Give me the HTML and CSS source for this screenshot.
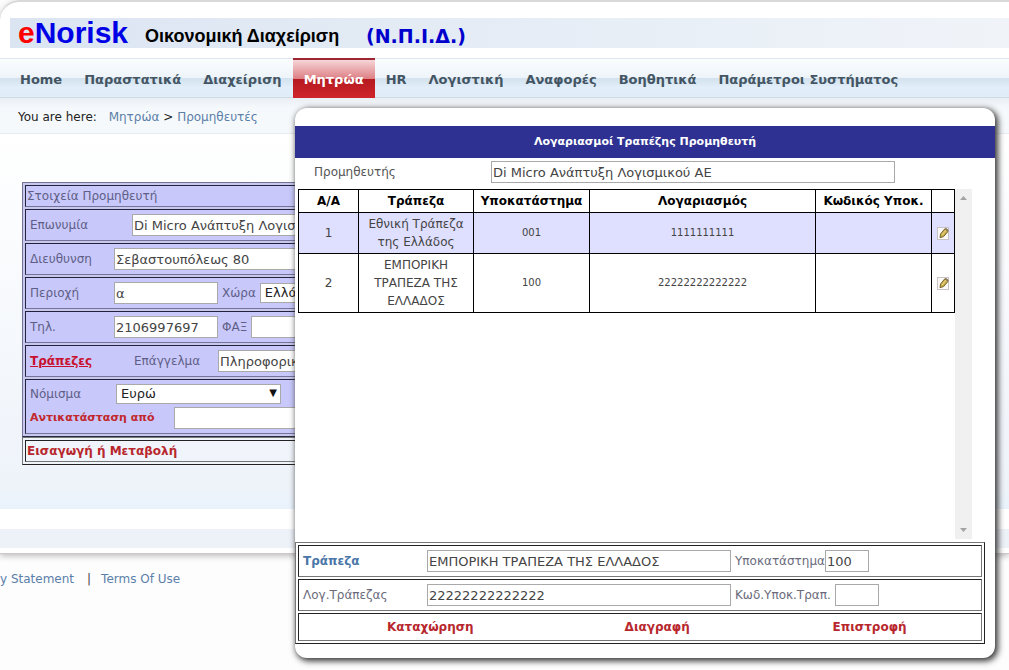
FILE: index.html
```html
<!DOCTYPE html>
<html lang="el">
<head>
<meta charset="utf-8">
<title>eNorisk</title>
<link rel="stylesheet" href="styles.css">
</head>
<body>
<div class="frame">
  <header class="brand">
    <span class="logo"><span class="logo-e">e</span>Norisk</span>
    <span class="product">Οικονομική Διαχείριση</span>
    <span class="entity">(Ν.Π.Ι.Δ.)</span>
  </header>
  <nav class="menu">
    <a href="#">Home</a>
    <a href="#">Παραστατικά</a>
    <a href="#">Διαχείριση</a>
    <a href="#" class="active">Μητρώα</a>
    <a href="#">HR</a>
    <a href="#">Λογιστική</a>
    <a href="#">Αναφορές</a>
    <a href="#">Βοηθητικά</a>
    <a href="#">Παράμετροι Συστήματος</a>
  </nav>
  <div class="crumbs">
    <span class="here">You are here:</span>
    <a href="#">Μητρώα</a> <span>&gt;</span> <a href="#">Προμηθευτές</a>
  </div>
  <main class="content">
    <form class="supplier">
      <div class="box lilac">
        <div class="row heading">Στοιχεία Προμηθευτή</div>
        <div class="row">
          <label class="wide" for="name">Επωνυμία</label>
          <input class="long" id="name" value="Di Micro Ανάπτυξη Λογισμικού ΑΕ">
        </div>
        <div class="row">
          <label class="col" for="address">Διευθυνση</label>
          <input class="long" id="address" value="Σεβαστουπόλεως 80">
        </div>
        <div class="row">
          <label class="col" for="area">Περιοχή</label>
          <input class="short" id="area" value="α">
          <label class="inline" for="country">Χώρα</label>
          <span class="pick"><select id="country"><option>Ελλάδα</option></select></span>
        </div>
        <div class="row">
          <label class="col" for="phone">Τηλ.</label>
          <input class="short" id="phone" value="2106997697">
          <label class="inline" for="fax">ΦΑΞ</label>
          <input class="short" id="fax">
        </div>
        <div class="row">
          <a href="#" class="banks">Τράπεζες</a>
          <label class="col" for="job">Επάγγελμα</label>
          <input class="long" id="job" value="Πληροφορική">
        </div>
        <div class="row double">
          <div class="line">
            <label class="currency" for="currency">Νόμισμα</label>
            <span class="pick"><select id="currency"><option>Ευρώ</option></select></span>
          </div>
          <div class="line">
            <label class="replace" for="replace">Αντικατάσταση από</label>
            <input class="long" id="replace">
          </div>
        </div>
      </div>
      <div class="box">
        <div class="row heading"><a href="#" class="action">Εισαγωγή ή Μεταβολή</a></div>
      </div>
    </form>
  </main>
  <div class="band"></div>
</div>
<footer class="legal"><a href="#">y Statement</a><span>|</span><a href="#">Terms Of Use</a></footer>

<section class="dialog" role="dialog" aria-labelledby="dialog-title">
  <h1 id="dialog-title">Λογαριασμοί Τραπέζης Προμηθευτή</h1>
  <div class="owner">
    <label for="owner">Προμηθευτής</label>
    <input id="owner" value="Di Micro Ανάπτυξη Λογισμικού ΑΕ">
  </div>
  <div class="viewport">
    <table class="accounts">
      <colgroup><col class="c-num"><col class="c-bank"><col class="c-branch"><col><col class="c-branch"><col class="c-edit"></colgroup>
      <thead>
        <tr><th>Α/Α</th><th>Τράπεζα</th><th>Υποκατάστημα</th><th>Λογαριασμός</th><th>Κωδικός Υποκ.</th><th></th></tr>
      </thead>
      <tbody>
        <tr class="selected">
          <td>1</td><td>Εθνική Τράπεζα της Ελλάδος</td><td class="code">001</td><td class="code">1111111111</td><td></td>
          <td><button class="edit" type="button" aria-label="Επεξεργασία"><svg viewBox="0 0 13 13" width="13" height="13"><rect x=".5" y=".5" width="11" height="12" fill="#fbfaf8" stroke="#c9c3c6"/><path d="M3 10.600 3.500 7 7.800 1.800 11 4.400 6.600 9.600Z" fill="#c9ad4c" stroke="#77652c"/><path d="M5 8 9 3.200" stroke="#f0dc94"/><path d="M7.800 1.800 9 .8 11.900 3.200 11 4.400Z" fill="#8b7a62"/></svg></button></td>
        </tr>
        <tr>
          <td>2</td><td>ΕΜΠΟΡΙΚΗ ΤΡΑΠΕΖΑ ΤΗΣ ΕΛΛΑΔΟΣ</td><td class="code">100</td><td class="code">22222222222222</td><td></td>
          <td><button class="edit" type="button" aria-label="Επεξεργασία"><svg viewBox="0 0 13 13" width="13" height="13"><rect x=".5" y=".5" width="11" height="12" fill="#fbfaf8" stroke="#c9c3c6"/><path d="M3 10.600 3.500 7 7.800 1.800 11 4.400 6.600 9.600Z" fill="#c9ad4c" stroke="#77652c"/><path d="M5 8 9 3.200" stroke="#f0dc94"/><path d="M7.800 1.800 9 .8 11.900 3.200 11 4.400Z" fill="#8b7a62"/></svg></button></td>
        </tr>
      </tbody>
    </table>
    <div class="track" aria-hidden="true">
      <svg viewBox="0 0 7 4" width="7" height="4"><path d="M0 4 3.500 0 7 4Z" fill="#a3a3a3"/></svg>
      <svg viewBox="0 0 7 4" width="7" height="4"><path d="M0 0 3.500 4 7 0Z" fill="#a3a3a3"/></svg>
    </div>
  </div>
  <form class="box editor">
    <div class="row">
      <label class="field bank" for="bank">Τράπεζα</label>
      <input class="value" id="bank" value="ΕΜΠΟΡΙΚΗ ΤΡΑΠΕΖΑ ΤΗΣ ΕΛΛΑΔΟΣ">
      <label class="inline tight" for="branch">Υποκατάστημα</label>
      <input class="tiny" id="branch" value="100">
    </div>
    <div class="row">
      <label class="field" for="account">Λογ.Τράπεζας</label>
      <input class="value" id="account" value="22222222222222">
      <label class="inline" for="code">Κωδ.Υποκ.Τραπ.</label>
      <input class="tiny" id="code">
    </div>
    <div class="row actions">
      <a href="#" class="action">Καταχώρηση</a>
      <a href="#" class="action">Διαγραφή</a>
      <a href="#" class="action">Επιστροφή</a>
    </div>
  </form>
</section>
</body>
</html>
```
FILE: styles.css
```css
* { box-sizing: border-box; }

body {
  margin: 0;
  position: relative;
  min-height: 100vh;
  overflow: hidden;
  background: #fdfdfe;
  color: #444;
  font: 12px/18px "DejaVu Sans", Verdana, sans-serif;
}

a { color: #5b7fa8; text-decoration: none; }

.frame {
  background: #fff;
  border-top: 2px solid #d9d9d9;
  border-bottom: 1px solid #cfc8c8;
  border-top-left-radius: 20px;
  box-shadow: 0 2px 6px #bbb;
  padding-bottom: 5px;
}

.brand {
  display: flex;
  align-items: center;
  height: 30px;
  margin: 16px 0 10px 10px;
  padding-left: 8px;
  background: linear-gradient(90deg, #dbe5f2, #f0f4f9);
  font-weight: bold;
  white-space: nowrap;
}
.logo {
  width: 127px;
  color: #0000e6;
  font: bold 30px/30px "Liberation Sans", Arial, sans-serif;
}
.logo-e { color: #f00; }
.product {
  width: 221px;
  padding-top: 6px;
  color: #000;
  font: bold 18px/24px "Liberation Sans", Arial, sans-serif;
}
.entity { padding-top: 6px; color: #0000cd; font-size: 19px; line-height: 24px; }

.menu {
  display: flex;
  height: 40px;
  padding-left: 9px;
  border-top: 1px solid #dde6ec;
  border-bottom: 1px solid #cfdbe4;
  background: linear-gradient(#fbfdfe 0, #edf4f9 50%, #d3e2ee 51%, #e2eef9 75%, #e0edf9 100%);
}
.menu a {
  padding: 0 11px;
  color: #435563;
  font-size: 13px;
  font-weight: bold;
  line-height: 42px;
  white-space: nowrap;
}
.menu a.active {
  margin-top: -1px;
  margin-bottom: -1px;
  border-top: 2px solid #9c2733;
  background: linear-gradient(#f6d5d7 0, #dd7f84 50%, #b51a20 51%, #cf242b 100%);
  color: #fff;
  line-height: 40px;
}

.crumbs {
  height: 36px;
  padding: 10px 18px;
  border-bottom: 1px solid #e6ecf2;
  background: linear-gradient(#e9eef3, #f6f9fc 10px);
  white-space: nowrap;
}
.here { margin-right: 8px; }
.crumbs span { color: #222; }

.content {
  padding: 48px 60px 44px 22px;
  background: linear-gradient(#fff 0, #eef3fa 95%, #e9f2fc 100%);
}
.band { height: 19px; margin-top: 20px; background: #edf1f8; }

.box {
  display: flex;
  flex-direction: column;
  gap: 2px;
  padding: 2px;
  border: 1px solid;
  border-color: #777 #222 #222 #777;
}
.lilac {
  border-color: #74749a #222 #2a2a44 #74749a;
  background: #c8c8ee;
}
.row {
  display: flex;
  align-items: center;
  height: 32px;
  padding: 0 4px;
  border: 1px solid;
  border-color: #222 #777 #777 #222;
  white-space: nowrap;
}
.lilac .row {
  border-color: #22223c #74749a #74749a #22223c;
  background: #c8c8fa;
}
.heading { height: 22px; padding: 0 1px; }
.row.double { flex-direction: column; align-items: stretch; height: 55px; padding-top: 2px; }
.line { display: flex; align-items: center; height: 24px; }

label { color: #6a6a7c; }
.lilac label, .lilac .heading { color: #5f5f86; }
.col { width: 84px; }
.wide { width: 102px; }
.currency { width: 86px; }
.lilac .replace { width: 144px; color: #c1272d; font-size: 11px; font-weight: bold; }
.inline { margin: 0 4px; }
.inline.tight { margin-right: 0; }
.banks { width: 104px; color: #c8102e; font-weight: bold; text-decoration: underline; }
.action { color: #b8272d; font-weight: bold; }

input {
  height: 22px;
  padding: 1px;
  border: 1px solid #a9a9a9;
  border-radius: 0;
  background: #fff;
  color: #444;
  font: 13px/18px "DejaVu Sans", Verdana, sans-serif;
}
.short { width: 104px; }
.long { width: 404px; }

.pick { position: relative; width: 165px; }
.pick select {
  display: block;
  width: 100%;
  height: 20px;
  padding: 0 4px;
  border: 1px solid #a9a9a9;
  border-radius: 0;
  appearance: none;
  background: #fff;
  color: #222;
  font: 13px/18px "DejaVu Sans", Verdana, sans-serif;
}
.pick::after {
  content: "▼";
  position: absolute;
  top: 0;
  right: 4px;
  color: #111;
  font-size: 10px;
  pointer-events: none;
}

.legal { display: flex; gap: 10px; padding-top: 16px; }
.legal span { padding-left: 3px; }

.dialog {
  position: absolute;
  top: 108px;
  left: 295px;
  right: 14px;
  padding: 18px 0 14px;
  border-radius: 12px;
  background: #fff;
  box-shadow: 2px 2px 6px 1px #333;
}
.dialog h1 {
  margin: 0;
  background: #2e3192;
  color: #fff;
  font-size: 11px;
  line-height: 32px;
  text-align: center;
}
.owner { display: flex; align-items: center; height: 31px; padding: 0 100px 3px 19px; }
.owner label { width: 177px; color: #555; }
.owner input { flex: 1; }

.viewport { display: flex; height: 350px; margin: 0 23px 3px 3px; align-items: flex-start; }
.accounts {
  flex: 1;
  border-collapse: collapse;
  table-layout: fixed;
  width: 100%;
  color: #444;
  text-align: center;
}
.accounts th, .accounts td { padding: 2px 8px; border: 1px solid #000; }
.accounts th { padding: 2px 0; color: #000; white-space: nowrap; }
.accounts .code { font-size: 10px; }
.accounts td:last-child { padding: 0; }
.selected { background: #dfdfff; }
.c-num { width: 60px; }
.c-bank { width: 115px; }
.c-branch { width: 116px; }
.c-edit { width: 23px; }
.edit { display: block; margin: 0 auto; padding: 0; border: 0; background: none; }
.edit svg { display: block; }
.track {
  display: flex;
  flex-direction: column;
  justify-content: space-between;
  align-items: center;
  width: 17px;
  height: 100%;
  padding: 7px 0;
  background: #f0f0f0;
}

.editor { margin-right: 10px; }
.field { width: 124px; }
.editor .bank { color: #4a76a8; font-weight: bold; }
.value { width: 304px; }
.tiny { width: 44px; }
.row.actions {
  display: grid;
  grid-template-columns: 40% 35% 25%;
  height: 28px;
  padding: 0 0 0 88px;
}
```
